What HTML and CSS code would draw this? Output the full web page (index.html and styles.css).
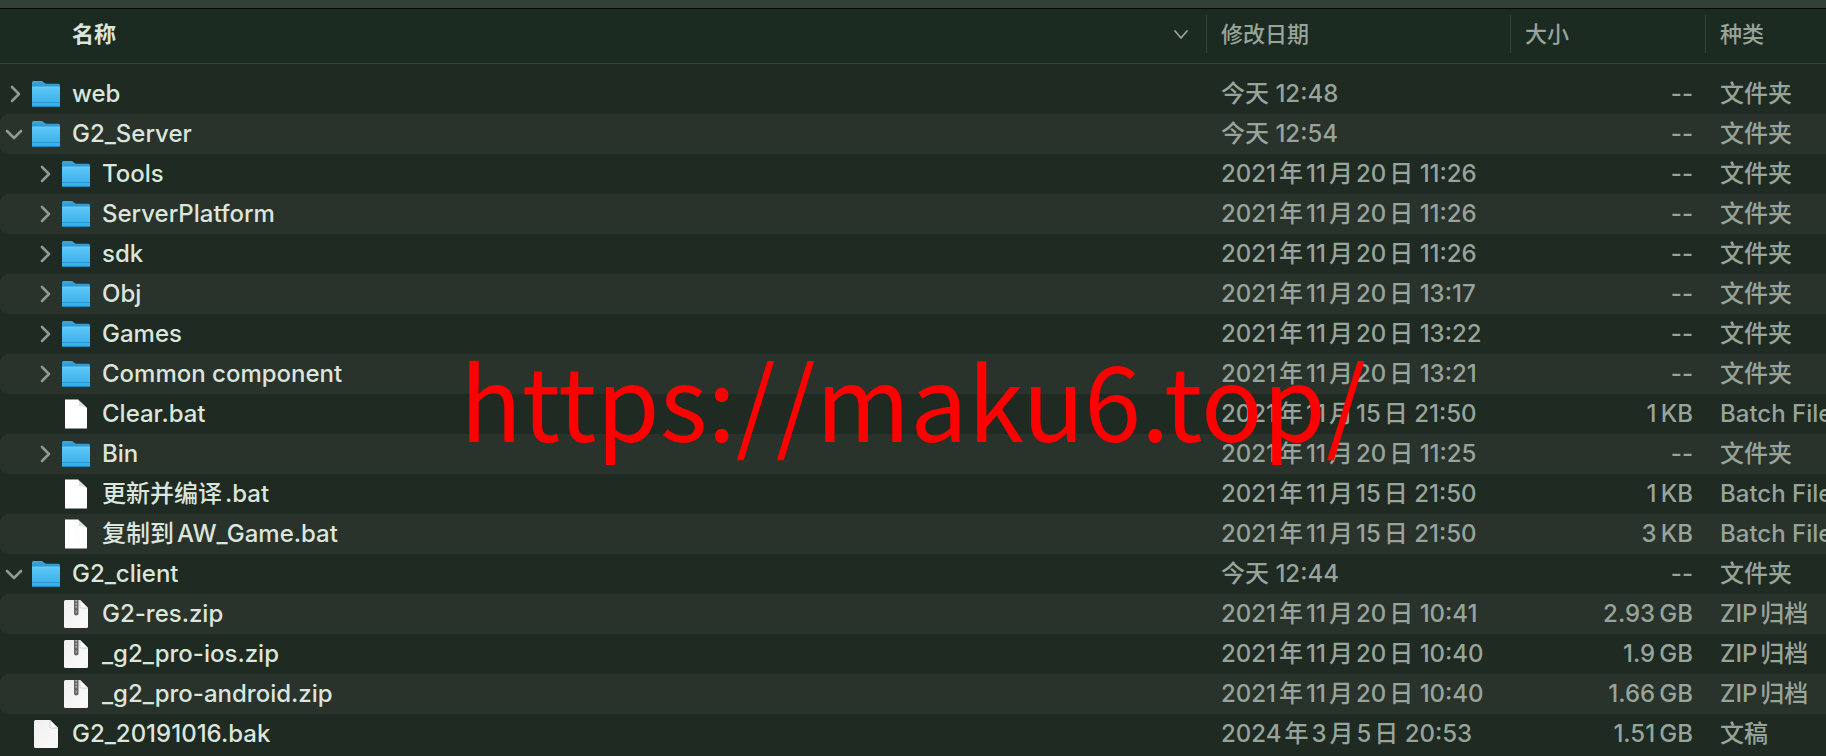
FILE: index.html
```
<!DOCTYPE html>
<html lang="zh-CN">
<head>
  <meta charset="UTF-8" />
  <title>G2</title>
  <meta name="viewport" content="width=device-width, initial-scale=1" />
  <link rel="stylesheet" href="styles.css">
</head>
<body>
  <!-- Icons -->
  <svg class="sprite" aria-hidden="true">
    <defs>
      <linearGradient id="folderBack" x1="0" y1="0" x2="0" y2="1">
        <stop offset="0" stop-color="#3fa9dc" />
        <stop offset="1" stop-color="#1e86bd" />
      </linearGradient>
      <linearGradient id="folderFront" x1="0" y1="0" x2="0" y2="1">
        <stop offset="0" stop-color="#6bcdf8" />
        <stop offset="0.15" stop-color="#58c3f5" />
        <stop offset="1" stop-color="#35ade9" />
      </linearGradient>
      <linearGradient id="paper" x1="0" y1="0" x2="1" y2="1">
        <stop offset="0" stop-color="#f0f0f0" />
        <stop offset="1" stop-color="#fafafa" />
      </linearGradient>
    </defs>
    <symbol id="right" viewBox="0 0 20 20">
      <path d="M7 3l7 7-7 7" fill="none" stroke="currentColor" stroke-width="2.6" stroke-linecap="round" stroke-linejoin="round" />
    </symbol>
    <symbol id="down" viewBox="0 0 20 20">
      <path d="M3 7l7 7 7-7" fill="none" stroke="currentColor" stroke-width="2.6" stroke-linecap="round" stroke-linejoin="round" />
    </symbol>
    <symbol id="sort" viewBox="0 0 18 18">
      <path d="M3 6l6 7 6-7" fill="none" stroke="currentColor" stroke-width="1.8" stroke-linecap="round" stroke-linejoin="round" />
    </symbol>
    <symbol id="folder" viewBox="0 0 28 30">
      <path d="M0 3.5Q0 2 1.5 2H9q1 0 1.800.6L12.500 4Q13.200 4.700 14.500 4.700H26.500Q28 4.700 28 6.200V12H0z" fill="url(#folderBack)" />
      <path d="M0 8.500Q0 7.500 1 7.500H27q1 0 1 1V26.500Q28 28 26.500 28H1.500Q0 28 0 26.500z" fill="url(#folderFront)" />
      <path d="M0 23.500H28" stroke="#2b94cd" stroke-width="0.900" />
      <path d="M0.500 27.500H27.500" stroke="#1f87bf" stroke-width="1" />
    </symbol>
    <symbol id="blank" viewBox="0 0 28 30">
      <path d="M3 0.500H16L25 9V29.500H3z" fill="#fff" />
      <path d="M16 0.500Q17.500 3 16.500 7.500Q21 6.800 25 9z" fill="#dfe3df" />
    </symbol>
    <symbol id="paperDoc" viewBox="0 0 28 30">
      <path d="M2 2.500Q2 1 3.500 1H18L26 9V27.500Q26 29 24.500 29H3.500Q2 29 2 27.500z" fill="url(#paper)" />
      <path d="M18 1V8Q18 9 19 9H26z" fill="#fff" stroke="#bfc2bf" stroke-width="0.800" />
    </symbol>
    <symbol id="zip" viewBox="0 0 28 30">
      <path d="M2 2.500Q2 1 3.500 1H18L26 9V27.500Q26 29 24.500 29H3.500Q2 29 2 27.500z" fill="url(#paper)" />
      <path d="M18 1V8Q18 9 19 9H26z" fill="#fff" stroke="#bfc2bf" stroke-width="0.800" />
      <path d="M12 1h4.500v13.500q0 2-2.250 2t-2.250-2z" fill="#686868" />
      <path d="M14.250 1v9" stroke="#bdbdbd" stroke-width="1.500" stroke-dasharray="1.500 1.500" />
      <path d="M14.250 11.500v2.500" stroke="#a5a5a5" stroke-width="1.200" />
    </symbol>
  </svg>

  <div class="toolbar"></div>

  <table class="file-list">
    <colgroup>
      <col class="col-name"><col class="col-date"><col class="col-size"><col class="col-kind">
    </colgroup>
    <thead>
      <tr>
        <th><button class="sort active">名称<svg><use href="#sort" /></svg></button></th>
        <th><button class="sort">修改日期</button></th>
        <th><button class="sort">大小</button></th>
        <th><button class="sort">种类</button></th>
      </tr>
    </thead>
    <tbody>
      <tr>
        <td><div class="name"><button class="toggle" aria-label="web"><svg><use href="#right" /></svg></button><svg class="icon"><use href="#folder" /></svg>web</div></td>
        <td>今天 12:48</td><td>--</td><td>文件夹</td>
      </tr>
      <tr>
        <td><div class="name"><button class="toggle open" aria-label="G2_Server"><svg><use href="#down" /></svg></button><svg class="icon"><use href="#folder" /></svg>G2_Server</div></td>
        <td>今天 12:54</td><td>--</td><td>文件夹</td>
      </tr>
      <tr>
        <td><div class="name child"><button class="toggle" aria-label="Tools"><svg><use href="#right" /></svg></button><svg class="icon"><use href="#folder" /></svg>Tools</div></td>
        <td>2021年11月20日 11:26</td><td>--</td><td>文件夹</td>
      </tr>
      <tr>
        <td><div class="name child"><button class="toggle" aria-label="ServerPlatform"><svg><use href="#right" /></svg></button><svg class="icon"><use href="#folder" /></svg>ServerPlatform</div></td>
        <td>2021年11月20日 11:26</td><td>--</td><td>文件夹</td>
      </tr>
      <tr>
        <td><div class="name child"><button class="toggle" aria-label="sdk"><svg><use href="#right" /></svg></button><svg class="icon"><use href="#folder" /></svg>sdk</div></td>
        <td>2021年11月20日 11:26</td><td>--</td><td>文件夹</td>
      </tr>
      <tr>
        <td><div class="name child"><button class="toggle" aria-label="Obj"><svg><use href="#right" /></svg></button><svg class="icon"><use href="#folder" /></svg>Obj</div></td>
        <td>2021年11月20日 13:17</td><td>--</td><td>文件夹</td>
      </tr>
      <tr>
        <td><div class="name child"><button class="toggle" aria-label="Games"><svg><use href="#right" /></svg></button><svg class="icon"><use href="#folder" /></svg>Games</div></td>
        <td>2021年11月20日 13:22</td><td>--</td><td>文件夹</td>
      </tr>
      <tr>
        <td><div class="name child"><button class="toggle" aria-label="Common component"><svg><use href="#right" /></svg></button><svg class="icon"><use href="#folder" /></svg>Common component</div></td>
        <td>2021年11月20日 13:21</td><td>--</td><td>文件夹</td>
      </tr>
      <tr>
        <td><div class="name child file"><svg class="icon"><use href="#blank" /></svg>Clear.bat</div></td>
        <td>2021年11月15日 21:50</td><td>1&#8201;KB</td><td>Batch File</td>
      </tr>
      <tr>
        <td><div class="name child"><button class="toggle" aria-label="Bin"><svg><use href="#right" /></svg></button><svg class="icon"><use href="#folder" /></svg>Bin</div></td>
        <td>2021年11月20日 11:25</td><td>--</td><td>文件夹</td>
      </tr>
      <tr>
        <td><div class="name child file"><svg class="icon"><use href="#blank" /></svg>更新并编译.bat</div></td>
        <td>2021年11月15日 21:50</td><td>1&#8201;KB</td><td>Batch File</td>
      </tr>
      <tr>
        <td><div class="name child file"><svg class="icon"><use href="#blank" /></svg>复制到AW_Game.bat</div></td>
        <td>2021年11月15日 21:50</td><td>3&#8201;KB</td><td>Batch File</td>
      </tr>
      <tr>
        <td><div class="name"><button class="toggle open" aria-label="G2_client"><svg><use href="#down" /></svg></button><svg class="icon"><use href="#folder" /></svg>G2_client</div></td>
        <td>今天 12:44</td><td>--</td><td>文件夹</td>
      </tr>
      <tr>
        <td><div class="name child file"><svg class="icon"><use href="#zip" /></svg>G2-res.zip</div></td>
        <td>2021年11月20日 10:41</td><td>2.93&#8201;GB</td><td>ZIP归档</td>
      </tr>
      <tr>
        <td><div class="name child file"><svg class="icon"><use href="#zip" /></svg>_g2_pro-ios.zip</div></td>
        <td>2021年11月20日 10:40</td><td>1.9&#8201;GB</td><td>ZIP归档</td>
      </tr>
      <tr>
        <td><div class="name child file"><svg class="icon"><use href="#zip" /></svg>_g2_pro-android.zip</div></td>
        <td>2021年11月20日 10:40</td><td>1.66&#8201;GB</td><td>ZIP归档</td>
      </tr>
      <tr>
        <td><div class="name file"><svg class="icon"><use href="#paperDoc" /></svg>G2_20191016.bak</div></td>
        <td>2024年3月5日 20:53</td><td>1.51&#8201;GB</td><td>文稿</td>
      </tr>
    </tbody>
  </table>

  <div class="watermark">https://maku6.top/</div>
</body>
</html>
```
FILE: styles.css
```
:root {
  --bg: #1e2a22;
  --header: #1c2b21;
  --stripe: #29332c;
  --toolbar: #334037;
  --line: #36423a;
  --text: #dce5dc;
  --muted: #98a39a;
}

* { box-sizing: border-box; }

body {
  margin: 0;
  min-height: 100vh;
  position: relative;
  overflow: hidden;
  background-color: var(--bg);
  color: var(--muted);
  font-family: Inter, "Noto Sans CJK SC", sans-serif;
  font-size: 24px;
  font-weight: 450;
  line-height: 40px;
  text-autospace: normal;
}

button {
  padding: 0;
  border: 0;
  background: none;
  color: inherit;
  font: inherit;
  cursor: pointer;
}

.sprite {
  display: block;
  width: 0;
  height: 0;
}

.toolbar {
  height: 9px;
  background-color: var(--toolbar);
  border-bottom: 1px solid #050806;
}

.file-list {
  width: 100%;
  table-layout: fixed;
  border-collapse: separate;
  border-spacing: 0;
}

.col-date { width: 304px; }
.col-size { width: 195px; }
.col-kind { width: 121px; }

/* Header */
th {
  height: 55px;
  padding: 0 0 4px;
  background-color: var(--header);
  border-bottom: 1px solid var(--line);
  font-weight: 450;
}

.sort {
  display: flex;
  align-items: center;
  justify-content: space-between;
  width: 100%;
  height: 38px;
  padding: 0 14px;
  font-size: 22px;
}

th + th .sort { border-left: 1px solid var(--line); }

.sort.active {
  padding: 0 16px 0 72px;
  color: var(--text);
  font-weight: 700;
}

.sort svg {
  width: 18px;
  height: 18px;
  color: var(--muted);
}

/* Rows */
tbody::before {
  content: "";
  display: block;
  height: 10px;
}

td {
  height: 40px;
  padding: 0 15px;
  white-space: nowrap;
}

td:first-child {
  padding: 0;
  color: var(--text);
}

td:nth-child(3) {
  padding-right: 12px;
  text-align: right;
}

tr:nth-child(even) td { background-color: var(--stripe); }
tr:nth-child(even) td:first-child { border-radius: 8px 0 0 8px; }

.name {
  display: flex;
  align-items: center;
  height: 40px;
}

.name.child { padding-left: 30px; }
.name.file::before {
  content: "";
  width: 32px;
}

.toggle {
  display: flex;
  width: 32px;
  padding-left: 5px;
  color: #8f9a91;
}

.toggle.open { padding-left: 4px; }

.toggle svg {
  width: 20px;
  height: 20px;
}

.icon {
  width: 28px;
  height: 30px;
  margin-right: 12px;
}

.watermark {
  position: absolute;
  top: 50%;
  left: 50%;
  transform: translate(-50%, -50%);
  margin-top: 20px;
  color: #f00;
  font-family: "Noto Sans CJK SC", sans-serif;
  font-size: 102px;
  font-weight: 400;
  line-height: 148px;
  white-space: nowrap;
  pointer-events: none;
}
```
